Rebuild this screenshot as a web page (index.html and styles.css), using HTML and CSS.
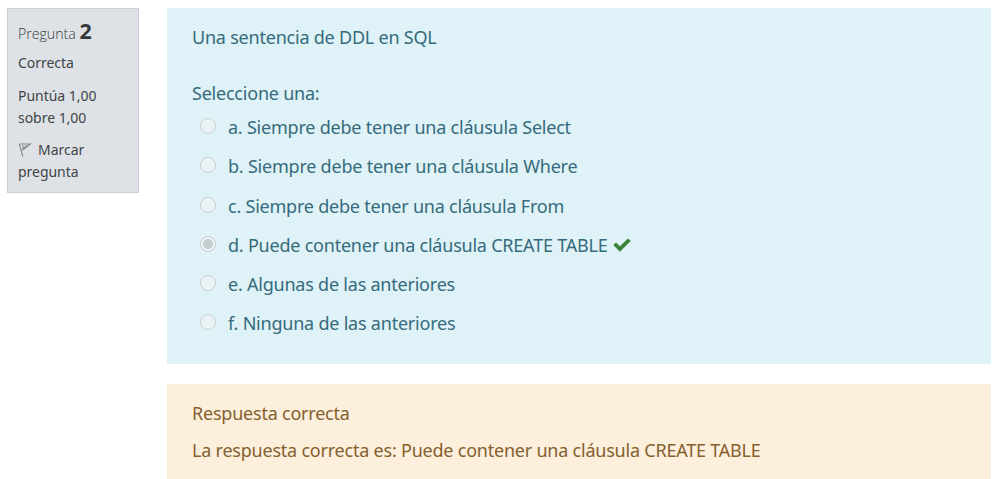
FILE: index.html
```html
<!DOCTYPE html>
<html lang="es">
<head>
<meta charset="utf-8">
<title>Pregunta 2</title>
<link rel="stylesheet" href="styles.css">
</head>
<body>
<main class="question">
  <aside class="info">
    <h3 class="number">Pregunta <span class="qno">2</span></h3>
    <div class="state">Correcta</div>
    <div class="grade">Puntúa 1,00<br>sobre 1,00</div>
    <div class="flag"><svg class="flag-icon" viewBox="0 0 14 16" aria-hidden="true"><path d="M1.3 2.2 4.8 14.7M1.5 2H12.3L4.2 8.3M4.7 3.4 5.3 6.5 8.8 3.6" fill="none" stroke="#85878a" stroke-width="1.2"/></svg><span>Marcar</span><br>pregunta</div>
  </aside>
  <div class="content">
    <section class="formulation">
      <p class="qtext">Una sentencia de DDL en SQL</p>
      <p class="prompt">Seleccione una:</p>
      <div class="answers">
        <label class="option"><i class="radio"></i><span>a. Siempre debe tener una cláusula Select</span></label>
        <label class="option"><i class="radio"></i><span>b. Siempre debe tener una cláusula Where</span></label>
        <label class="option"><i class="radio"></i><span>c. Siempre debe tener una cláusula From</span></label>
        <label class="option"><i class="radio checked"></i><span>d. Puede contener una cláusula CREATE TABLE</span><svg class="check" viewBox="0 0 18 14" aria-hidden="true"><path d="M.3 7.1 3 4.4 6.9 8.2 14.9.4 17.7 3.1 6.9 13.7Z" fill="#398439"/></svg></label>
        <label class="option"><i class="radio"></i><span>e. Algunas de las anteriores</span></label>
        <label class="option"><i class="radio"></i><span>f. Ninguna de las anteriores</span></label>
      </div>
    </section>
    <section class="outcome">
      <p>Respuesta correcta</p>
      <p>La respuesta correcta es: Puede contener una cláusula CREATE TABLE</p>
    </section>
  </div>
</main>
</body>
</html>
```
FILE: styles.css
```css
* { box-sizing: border-box; }
body {
  margin: 0;
  height: 479px;
  overflow: hidden;
  background: #fff;
  font-family: "Noto Sans", "Open Sans", sans-serif;
  font-size: 18px;
  line-height: 28px;
  letter-spacing: -0.22px;
}
p { margin: 0; }
.question {
  display: grid;
  grid-template-columns: 132px 824px;
  column-gap: 28px;
  align-items: start;
  padding: 8px 0 0 7px;
}
.info {
  height: 185px;
  padding: 10px;
  border: 1px solid #cad0d7;
  background: #dee2e6;
  color: #414446;
  font-size: 14px;
  line-height: 22px;
  letter-spacing: -0.03px;
  white-space: nowrap;
}
.number { margin: -1px 0 9px; height: 25px; color: #373a3c; font: 300 14.2px/25px "Open Sans", sans-serif; letter-spacing: -0.03px; }
.qno { font: 700 21.5px/25px "Noto Sans", sans-serif; }
.state { margin-bottom: 11px; }
.grade { margin-bottom: 10px; }
.flag-icon { width: 14px; height: 16px; margin-right: 6px; vertical-align: -3px; }
.formulation {
  height: 356px;
  padding: 15px 25px;
  background: #def2f8;
  color: #366b7c;
}
.prompt { margin-top: 28px; }
.answers { padding-top: 0.55px; }
.option {
  display: flex;
  align-items: center;
  height: 39.2px;
  padding-left: 7.6px;
}
.radio {
  width: 16px;
  height: 16px;
  margin: -2px 12.4px 0 0;
  border: 1px solid #c9cfd1;
  border-radius: 50%;
  background: #ebf3f6;
}
.radio.checked { background: radial-gradient(circle, #c6cccf 4.5px, #ebf3f6 5.3px); }
.check { width: 18px; height: 14px; margin-left: 6px; }
.outcome {
  height: 110px;
  margin-top: 20px;
  padding: 15px 25px;
  background: #fcefdc;
  color: #855f2f;
}
.outcome p + p { margin-top: 9px; }
```
